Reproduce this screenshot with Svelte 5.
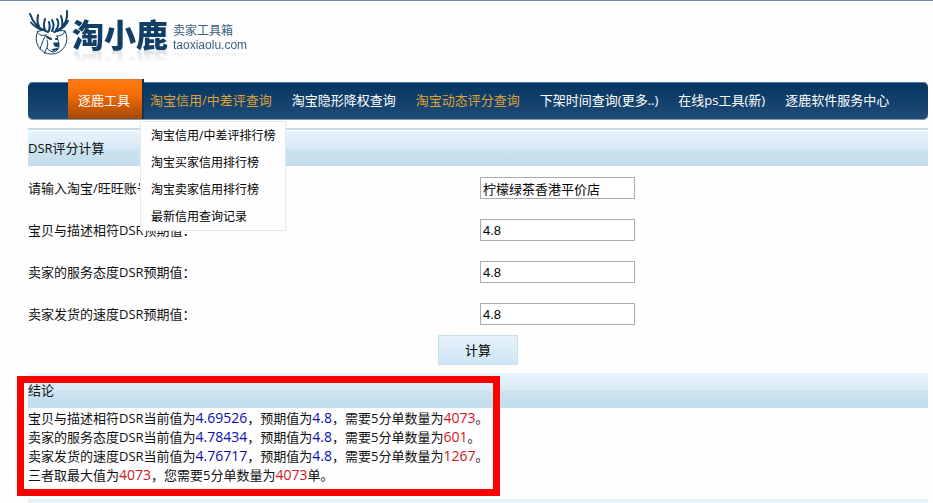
<script lang="ts">
	type MenuItem = { label: string; active?: boolean; hot?: boolean; children?: string[] };

	const menu: MenuItem[] = [
		{ label: '逐鹿工具', active: true },
		{
			label: '淘宝信用/中差评查询',
			hot: true,
			children: ['淘宝信用/中差评排行榜', '淘宝买家信用排行榜', '淘宝卖家信用排行榜', '最新信用查询记录']
		},
		{ label: '淘宝隐形降权查询' },
		{ label: '淘宝动态评分查询', hot: true },
		{ label: '下架时间查询(更多..)' },
		{ label: '在线ps工具(新)' },
		{ label: '逐鹿软件服务中心' }
	];

	let fields = $state([
		{ id: 'nick', label: '请输入淘宝/旺旺账号：', value: '柠檬绿茶香港平价店' },
		{ id: 'desc', label: '宝贝与描述相符DSR预期值：', value: '4.8' },
		{ id: 'service', label: '卖家的服务态度DSR预期值：', value: '4.8' },
		{ id: 'speed', label: '卖家发货的速度DSR预期值：', value: '4.8' }
	]);

	const results = [
		{ name: '宝贝与描述相符', current: '4.69526', target: '4.8', orders: 4073 },
		{ name: '卖家的服务态度', current: '4.78434', target: '4.8', orders: 601 },
		{ name: '卖家发货的速度', current: '4.76717', target: '4.8', orders: 1267 }
	];
	const most = Math.max(...results.map((r) => r.orders));
</script>

<div class="page">
	<header>
		<a class="logo" href="#home">
			<svg width="44" height="50" viewBox="0 0 44 50" fill="none" stroke="#123f66" stroke-linecap="round" stroke-linejoin="round">
				<path d="M10 23A15.500 15.500 0 1 0 37 23" stroke-width="1" />
				<path d="M20 24C11 21 5 15 2 6M14 22C9 20 5 17 3 14.500M11 18C9 15 9 12 10 7M17 22C15 18 16 14 17 11" stroke-width="2" />
				<path d="M26 24C35 21 40 13 39 3M31 22C35 20 38 17 40 13M34 18C35 14 34 11 33 8M28 22C31 18 31 14 29 11M24 23C26 19 26 15 24 12M21 23C22 20 22 17 21 14" stroke-width="2" />
				<path d="M20 24C17 22 13 22 9 24C11 27 14 28 18 27M27 24C30 23 34 22 37 23C36 26 33 28 29 28" stroke-width="1" />
				<path d="M18 27C15 31 14 36 12 41M29 28C30 32 31 35 31 38C31 41 28 44 25 44C22 43 20 42 19 40C17 43 16 45 17 46M19 40C20 37 20 34 19 32" stroke-width="1" />
				<path d="M19 29L23 31M28 31L29 31M25 42L29 41" stroke-width="2" />
				<path d="M26 35L31 35L30 39L27 38Z" fill="#123f66" stroke-width="1" />
			</svg>
			<strong>淘小鹿</strong>
			<span class="slogan">
				<span>卖家工具箱</span>
				<span class="domain">taoxiaolu.com</span>
			</span>
		</a>
	</header>

	<nav>
		<ul class="menu">
			{#each menu as item}
				<li class:active={item.active} class:hot={item.hot}>
					<a href="#menu">{item.label}</a>
					{#if item.children}
						<ul class="dropdown">
							{#each item.children as child}
								<li><a href="#rank">{child}</a></li>
							{/each}
						</ul>
					{/if}
				</li>
			{/each}
		</ul>
	</nav>

	<main>
		<form onsubmit={(e) => e.preventDefault()}>
			<div class="topline"></div>
			<h2>DSR评分计算</h2>
			{#each fields as field}
				<div class="row">
					<label for={field.id}>{field.label}</label>
					<input id={field.id} type="text" bind:value={field.value} />
				</div>
			{/each}
			<button type="submit">计算</button>
		</form>

		<section class="result">
			<h2>结论</h2>
			{#each results as r}
				<p>
					{r.name}DSR当前值为<b class="blue">{r.current}</b>，预期值为<b class="blue">{r.target}</b>，需要5分单数量为<b class="red">{r.orders}</b>。
				</p>
			{/each}
			<p>三者取最大值为<b class="red">{most}</b>，您需要5分单数量为<b class="red">{most}</b>单。</p>
			<div class="highlight"></div>
		</section>
	</main>

	<footer></footer>
</div>

<style>
	:global(body) {
		background: #fefefe;
	}

	.page {
		padding: 0 5px 0 28px;
		border-top: 1px solid #6288ae;
		font-family: 'Open Sans', 'Noto Sans CJK SC', sans-serif;
		font-size: 13px;
		line-height: 19px;
		color: #111;
	}

	a {
		color: inherit;
		text-decoration: none;
	}

	ul {
		margin: 0;
		padding: 0;
		list-style: none;
	}

	header {
		height: 74px;
		padding-top: 7px;
	}

	.logo {
		display: flex;
		align-items: flex-start;
		width: max-content;
		color: #123f66;
	}

	.logo strong {
		padding-top: 5px;
		font-family: 'Noto Sans CJK SC', sans-serif;
		font-size: 32px;
		line-height: 40px;
		font-weight: 900;
		-webkit-box-reflect: below -6px linear-gradient(transparent 65%, rgba(0, 0, 0, 0.2));
	}

	.slogan {
		display: flex;
		flex-direction: column;
		padding: 16px 0 0 5px;
		font-size: 12px;
		line-height: 14px;
		color: #3b5f82;
	}

	.domain {
		font-family: 'Liberation Sans', sans-serif;
		-webkit-box-reflect: below -2px linear-gradient(transparent 40%, rgba(0, 0, 0, 0.2));
	}

	nav {
		box-sizing: border-box;
		height: 38px;
		padding-left: 40px;
		border-radius: 5px;
		background: linear-gradient(#043560, #214c78);
		box-shadow: inset 0 1px #54799b, inset 0 -1px #7e9bb6;
	}

	.menu {
		display: flex;
	}

	.menu > li {
		position: relative;
		color: #fff;
		white-space: nowrap;
	}

	.menu > li > a {
		display: block;
		padding: 0 10px 2px;
		line-height: 36px;
	}

	.menu > .hot {
		color: #dfa036;
	}

	.menu > .active {
		margin: -3px -2px 0 0;
		padding: 3px 2px 0 0;
		background: linear-gradient(#e0722b 1px, #ff7a10 2px, #f36a05 40%, #a04604);
		box-shadow: 2px 0 #17314c;
		clip-path: inset(0 -2px 1px 0);
	}

	.dropdown {
		position: absolute;
		top: 39px;
		left: 0;
		border: 1px solid #e3e9ee;
		background: #fefefe;
		font-size: 12px;
		color: #000;
	}

	.dropdown a {
		display: block;
		padding: 0 10px;
		line-height: 27px;
	}

	form {
		display: flex;
		flex-direction: column;
		margin-top: 8px;
	}

	.topline {
		height: 2px;
		margin-bottom: 1px;
		background: #c5dced;
	}

	h2 {
		margin: 0 0 1px;
		background: linear-gradient(#e9f4fc, #d7e9f4 50%, #cce3f0 51%, #c2ddec);
		font-size: 13px;
		line-height: 35px;
		font-weight: 400;
	}

	.row {
		display: grid;
		grid-template-columns: 1fr 1fr;
		gap: 4px;
		align-items: center;
		height: 42px;
	}

	input {
		box-sizing: border-box;
		width: 155px;
		height: 22px;
		padding: 0 2px;
		border: 1px solid #abadb3;
		background: #fff;
		color: #000;
		font-family: 'Liberation Sans', 'Noto Sans CJK SC', sans-serif;
		font-size: 13px;
	}

	button {
		align-self: center;
		width: 80px;
		height: 30px;
		margin-bottom: 8px;
		padding: 0 0 2px;
		border: 1px solid #c5e2ea;
		background: linear-gradient(#e5f1fa, #cfe5f5);
		color: #000;
		font-family: inherit;
		font-size: 13px;
	}

	.result {
		position: relative;
	}

	.result p {
		margin: 0;
	}

	.result b {
		font-size: 14px;
		line-height: 14px;
		font-weight: 400;
	}

	.blue {
		color: #0c0cb4;
	}

	.red {
		color: #d2161e;
	}

	.highlight {
		position: absolute;
		top: 3px;
		bottom: -11px;
		left: -11px;
		box-sizing: border-box;
		width: 483px;
		border: 7px solid #fe0000;
		pointer-events: none;
	}

	footer {
		height: 4px;
		margin-top: 14px;
		background: #e7f2f9;
	}
</style>
